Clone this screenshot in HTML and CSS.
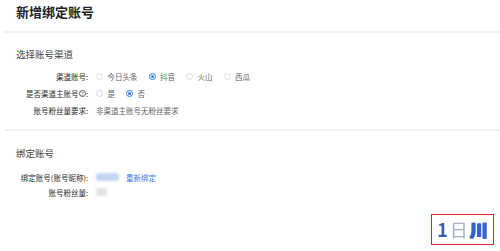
FILE: index.html
```html
<!DOCTYPE html>
<html lang="zh-CN">
<head>
<meta charset="utf-8">
<link rel="stylesheet" href="styles.css">
</head>
<body>
<div class="page">
  <header class="head"><h1>新增绑定账号</h1></header>
  <section class="sec sec-channel">
    <h2>选择账号渠道</h2>
    <div class="form">
      <div class="row">
        <span class="label">渠道账号:</span>
        <div class="val">
          <span class="opt"><i class="radio"></i>今日头条</span>
          <span class="opt"><i class="radio on"></i>抖音</span>
          <span class="opt"><i class="radio"></i>火山</span>
          <span class="opt"><i class="radio"></i>西瓜</span>
        </div>
      </div>
      <div class="row">
        <span class="label">是否渠道主账号<i class="help">?</i>:</span>
        <div class="val">
          <span class="opt"><i class="radio"></i>是</span>
          <span class="opt"><i class="radio on"></i>否</span>
        </div>
      </div>
      <div class="row">
        <span class="label">账号粉丝量要求:</span>
        <div class="val"><span class="text">非渠道主账号无粉丝要求</span></div>
      </div>
    </div>
  </section>
  <section class="sec sec-bind">
    <h2>绑定账号</h2>
    <div class="form">
      <div class="row row-s">
        <span class="label">绑定账号(账号昵称):</span>
        <div class="val"><span class="blob blob-blue"></span><a class="link">重新绑定</a></div>
      </div>
      <div class="row row-s">
        <span class="label">账号粉丝量:</span>
        <div class="val"><span class="blob blob-gray"></span></div>
      </div>
    </div>
  </section>
  <div class="foot">
    <div class="stamp"><span class="c1">1</span><span class="c2">日</span><span class="c3">川</span></div>
  </div>
</div>
</body>
</html>
```
FILE: styles.css
```css
* { box-sizing: border-box; }
html, body { margin: 0; padding: 0; background: #fff; }
body {
  width: 500px;
  height: 251px;
  overflow: hidden;
  font-family: "Noto Sans CJK SC", "Noto Sans", sans-serif;
  color: #333;
}
.page { display: flex; flex-direction: column; }
.head {
  margin-left: 4px;
  height: 33px;
  border-bottom: 2px solid #f2f2f2;
  padding: 3px 0 0 12px;
}
.head h1 {
  margin: 0;
  font-size: 13px;
  line-height: 18px;
  font-weight: 700;
  color: #222;
}
.sec { margin-left: 4px; }
.sec h2 {
  margin: 0 0 0 12px;
  font-size: 9.5px;
  line-height: 12px;
  font-weight: 400;
  color: #444;
}
.sec-channel {
  padding: 14.5px 0 10.5px;
  border-bottom: 2px solid #f2f2f2;
}
.sec-channel .form { margin-top: 8px; }
.sec-bind { padding-top: 15.5px; }
.sec-bind .form { margin-top: 11px; }
.form { display: flex; flex-direction: column; }
.row {
  display: flex;
  align-items: center;
  height: 17px;
  font-size: 7.5px;
}
.row-s { height: 15px; }
.label {
  width: 84px;
  text-align: right;
  color: #2a2a2a;
  display: flex;
  justify-content: flex-end;
  align-items: center;
  white-space: nowrap;
}
.help {
  font-style: normal;
  display: inline-flex;
  align-items: center;
  justify-content: center;
  width: 7px;
  height: 7px;
  border: 0.8px solid #555;
  border-radius: 50%;
  font-size: 5px;
  line-height: 1;
  margin-left: 0.5px;
  color: #444;
}
.val {
  display: flex;
  align-items: center;
  margin-left: 8px;
  color: #666;
}
.opt {
  display: inline-flex;
  align-items: center;
  margin-right: 11px;
  color: #666;
}
.radio {
  display: inline-block;
  width: 7px;
  height: 7px;
  border: 1px solid #d9d9d9;
  border-radius: 50%;
  margin-right: 4.5px;
  position: relative;
}
.radio.on { border-color: #2f7cf0; }
.radio.on::after {
  content: "";
  position: absolute;
  left: 1px;
  top: 1px;
  width: 3px;
  height: 3px;
  border-radius: 50%;
  background: #2f7cf0;
}
.text { color: #666; }
.blob {
  display: inline-block;
  height: 8px;
  border-radius: 3px;
  filter: blur(1px);
}
.blob-blue { width: 23px; background: #c5d6f4; margin-right: 7px; }
.blob-gray { width: 11px; background: #e2e2e2; }
.link { color: #3b78e0; }
.foot {
  display: flex;
  justify-content: flex-end;
  padding: 14px 6px 0 0;
}
.stamp {
  width: 63px;
  height: 31px;
  border: 1.5px solid #e0202a;
  display: flex;
  align-items: center;
  justify-content: center;
  gap: 2px;
  font-size: 18px;
  font-weight: 700;
}
.stamp span { filter: blur(0.7px); }
.stamp .c1 { color: #3a5cb0; }
.stamp .c2 { color: #a4afcc; font-weight: 400; }
.stamp .c3 { color: #3562d6; text-shadow: 1px 0 0 #3562d6, -1px 0 0 #3562d6; }
```
